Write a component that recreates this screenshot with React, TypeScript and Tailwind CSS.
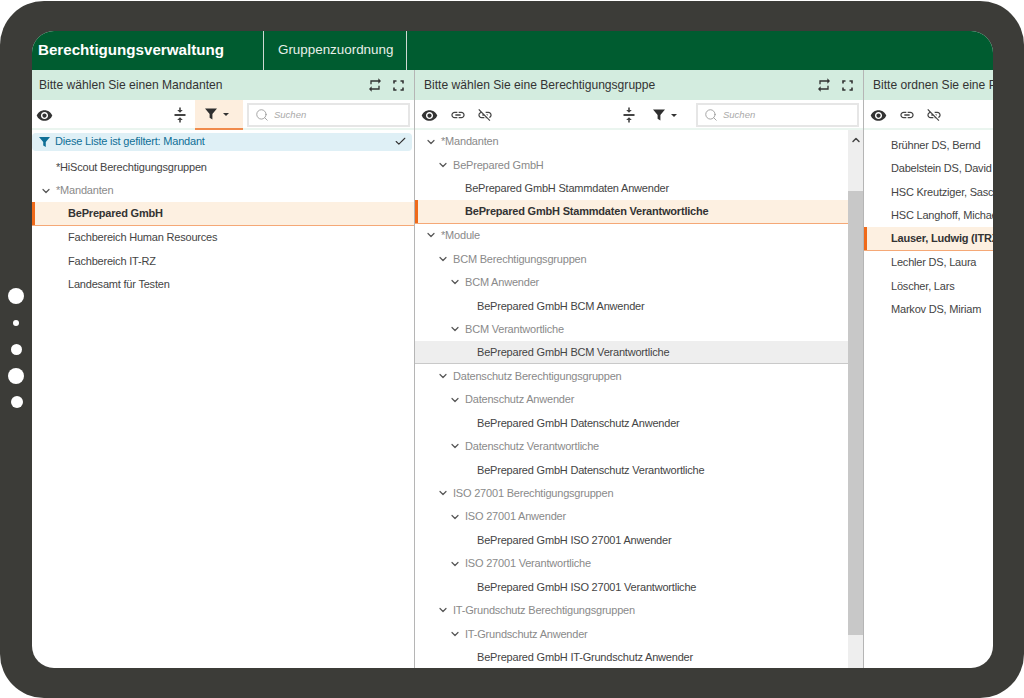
import React from "react";
import { MdVisibility, MdLink, MdLinkOff, MdRepeat } from "react-icons/md";
import { ChevronDown, ChevronUp, Search, Check } from "lucide-react";

const Eye = () => <MdVisibility size={17} className="text-[#333]" />;
const Funnel = ({ color = "#2f2f2f", w = 12, h = 12 }: { color?: string; w?: number; h?: number }) => (
  <svg width={w} height={h} viewBox="0 0 12 12" fill={color}>
    <path d="M0 0.5 H12 L7.4 6 V11.5 L4.6 9.8 V6 Z" />
  </svg>
);
const SplitIcon = () => (
  <svg width="12" height="16" viewBox="0 0 12 16" className="text-[#444]" fill="currentColor">
    <rect x="0.5" y="7" width="11" height="2" />
    <path d="M6 5.8 L3.2 3 H5.2 V0.5 H6.8 V3 H8.8 Z" />
    <path d="M6 10.2 L3.2 13 H5.2 V15.5 H6.8 V13 H8.8 Z" />
  </svg>
);
const FullIcon = () => (
  <svg width="11" height="11" viewBox="0 0 11 11" fill="none" stroke="#333" strokeWidth="1.6">
    <path d="M1 3.5V1H3.5M7.5 1H10V3.5M10 7.5V10H7.5M3.5 10H1V7.5" />
  </svg>
);
const FilterBtn = ({ active }: { active?: boolean }) => (
  <div className={"flex h-[30px] w-[48px] items-center justify-center gap-[6px] pr-[4px] " + (active ? "border-b-2 border-[#f08a4b] bg-[#fdeede]" : "")}>
    <Funnel />
    <span className="h-0 w-0 border-x-[3.5px] border-t-[3.5px] border-x-transparent border-t-[#333]" />
  </div>
);
const SearchBox = ({ w }: { w: string }) => (
  <div className={"flex h-[24px] items-center gap-[5px] border-2 border-[#e6e6e6] bg-white pl-[6px] " + w}>
    <Search size={14} className="text-[#999]" strokeWidth={1.5} />
    <span className="text-[9.5px] text-[#aaa] italic">Suchen</span>
  </div>
);
const Title = ({ text, icons = true, pl }: { text: string; icons?: boolean; pl: string }) => (
  <div className={"flex h-[30px] shrink-0 items-center bg-[#d3ecdf] pr-[10px] " + pl}>
    <span className="flex-1 text-[12.1px] whitespace-nowrap text-[#333]">{text}</span>
    {icons && (
      <div className="flex items-center gap-[10px]">
        <MdRepeat size={16} className="text-[#333]" />
        <FullIcon />
      </div>
    )}
  </div>
);

type RowT = { t: string; lvl: number; kind?: "group" | "leaf" | "sel" | "hover" };
const Row = ({ t, lvl, kind = "leaf", base }: RowT & { base: number }) => {
  const pad = base + lvl * 12;
  const cls =
    kind === "sel"
      ? "border-b border-[#f5a876] bg-[#fdf0e1] font-bold text-[#333]"
      : kind === "hover"
        ? "border-b border-[#c9c9c9] bg-[#eeeeee] text-[#444]"
        : kind === "group"
          ? "text-[#8a8a8a]"
          : "text-[#444]";
  return (
    <div className={"relative flex h-[23.45px] items-center text-[11px] tracking-[-0.2px] whitespace-nowrap " + cls} style={{ paddingLeft: pad }}>
      {kind === "sel" && <span className="absolute top-0 bottom-0 left-0 w-[3px] bg-[#ef6a1a]" />}
      {kind === "group" && <ChevronDown size={12} strokeWidth={2.4} className="mr-[4px] -ml-[16px] text-[#555]" />}
      {t}
    </div>
  );
};

const col2: RowT[] = [
  { t: "*Mandanten", lvl: 0, kind: "group" },
  { t: "BePrepared GmbH", lvl: 1, kind: "group" },
  { t: "BePrepared GmbH Stammdaten Anwender", lvl: 2 },
  { t: "BePrepared GmbH Stammdaten Verantwortliche", lvl: 2, kind: "sel" },
  { t: "*Module", lvl: 0, kind: "group" },
  { t: "BCM Berechtigungsgruppen", lvl: 1, kind: "group" },
  { t: "BCM Anwender", lvl: 2, kind: "group" },
  { t: "BePrepared GmbH BCM Anwender", lvl: 3 },
  { t: "BCM Verantwortliche", lvl: 2, kind: "group" },
  { t: "BePrepared GmbH BCM Verantwortliche", lvl: 3, kind: "hover" },
  { t: "Datenschutz Berechtigungsgruppen", lvl: 1, kind: "group" },
  { t: "Datenschutz Anwender", lvl: 2, kind: "group" },
  { t: "BePrepared GmbH Datenschutz Anwender", lvl: 3 },
  { t: "Datenschutz Verantwortliche", lvl: 2, kind: "group" },
  { t: "BePrepared GmbH Datenschutz Verantwortliche", lvl: 3 },
  { t: "ISO 27001 Berechtigungsgruppen", lvl: 1, kind: "group" },
  { t: "ISO 27001 Anwender", lvl: 2, kind: "group" },
  { t: "BePrepared GmbH ISO 27001 Anwender", lvl: 3 },
  { t: "ISO 27001 Verantwortliche", lvl: 2, kind: "group" },
  { t: "BePrepared GmbH ISO 27001 Verantwortliche", lvl: 3 },
  { t: "IT-Grundschutz Berechtigungsgruppen", lvl: 1, kind: "group" },
  { t: "IT-Grundschutz Anwender", lvl: 2, kind: "group" },
  { t: "BePrepared GmbH IT-Grundschutz Anwender", lvl: 3 },
];
const col1: RowT[] = [
  { t: "*HiScout Berechtigungsgruppen", lvl: 0 },
  { t: "*Mandanten", lvl: 0, kind: "group" },
  { t: "BePrepared GmbH", lvl: 1, kind: "sel" },
  { t: "Fachbereich Human Resources", lvl: 1 },
  { t: "Fachbereich IT-RZ", lvl: 1 },
  { t: "Landesamt für Testen", lvl: 1 },
];
const col3: RowT[] = [
  { t: "Brühner DS, Bernd", lvl: 0 },
  { t: "Dabelstein DS, David", lvl: 0 },
  { t: "HSC Kreutziger, Sascha", lvl: 0 },
  { t: "HSC Langhoff, Michael", lvl: 0 },
  { t: "Lauser, Ludwig (ITRZ)", lvl: 0, kind: "sel" },
  { t: "Lechler DS, Laura", lvl: 0 },
  { t: "Löscher, Lars", lvl: 0 },
  { t: "Markov DS, Miriam", lvl: 0 },
];

const bar = "flex h-[30px] shrink-0 items-center shadow-[inset_0_-2px_0_#eaf5ef] ";

export default function App() {
  return (
    <div className="relative h-[698px] w-[1024px] overflow-hidden bg-white pt-px font-['Liberation_Sans',Arial,sans-serif]">
      <div className="h-[697px] rounded-[44px] bg-[#3c3c38] pt-[30px] pr-[31px] pb-[30px] pl-[32px]">
        <div className="flex h-full flex-col overflow-hidden rounded-[22px] bg-white">
          <div className="flex h-[39px] shrink-0 items-stretch bg-[#005c30] text-white">
            <div className="flex w-[232px] items-center border-r border-[#cfd8d2] pl-[6px] text-[15.15px] font-bold">Berechtigungsverwaltung</div>
            <div className="flex w-[143px] items-center border-r border-[#cfd8d2] pl-[14px] text-[13.4px] text-[#e8efe9]">Gruppenzuordnung</div>
          </div>
          <div className="flex min-h-0 flex-1">
            <div className="flex w-[383px] shrink-0 flex-col border-r border-[#b5b5b5]">
              <Title text="Bitte wählen Sie einen Mandanten" pl="pl-[7px]" />
              <div className={bar + "pl-[4px]"}>
                <Eye />
                <div className="flex-1" />
                <SplitIcon />
                <div className="ml-[9px]"><FilterBtn active /></div>
                <div className="mr-[4px] ml-[4px]"><SearchBox w="w-[163px]" /></div>
              </div>
              <div className="mt-[2.5px] mr-[2px] mb-[5px] flex h-[18px] shrink-0 items-center rounded-sm bg-[#dff0f6] pr-[5px] pl-[7px] text-[11px] tracking-[-0.2px] text-[#0f6f96]">
                <Funnel color="#0f6f96" w={11} h={12} />
                <span className="ml-[5px] flex-1">Diese Liste ist gefiltert: Mandant</span>
                <Check size={13} className="text-[#333]" />
              </div>
              {col1.map((r) => <Row key={r.t} {...r} base={24} />)}
            </div>
            <div className="flex w-[449px] shrink-0 flex-col border-r border-[#b5b5b5]">
              <Title text="Bitte wählen Sie eine Berechtigungsgruppe" pl="pl-[9px]" />
              <div className={bar + "pl-[6px]"}>
                <Eye />
                <MdLink size={16} className="ml-[12px] text-[#444]" />
                <MdLinkOff size={16} className="ml-[11px] text-[#444]" />
                <div className="flex-1" />
                <SplitIcon />
                <div className="ml-[8px]"><FilterBtn /></div>
                <div className="mr-[4px] ml-[5px]"><SearchBox w="w-[163px]" /></div>
              </div>
              <div className="flex min-h-0 flex-1">
                <div className="min-w-0 flex-1 overflow-hidden">
                  {col2.map((r) => <Row key={r.t} {...r} base={26} />)}
                </div>
                <div className="flex w-[15px] shrink-0 flex-col bg-[#eeeeee]">
                  <div className="flex h-[60.5px] justify-center pt-[4px]"><ChevronUp size={12} strokeWidth={3} className="text-[#444]" /></div>
                  <div className="h-[444px] bg-[#c8c8c8]" />
                </div>
              </div>
            </div>
            <div className="flex min-w-0 flex-1 flex-col overflow-hidden">
              <Title text="Bitte ordnen Sie eine Person zu" icons={false} pl="pl-[9px]" />
              <div className={bar + "pl-[6px]"}>
                <Eye />
                <MdLink size={16} className="ml-[12px] text-[#444]" />
                <MdLinkOff size={16} className="ml-[11px] text-[#444]" />
              </div>
              <div className="overflow-hidden pt-[3.5px]">
                {col3.map((r) => <Row key={r.t} {...r} base={27} />)}
              </div>
            </div>
          </div>
        </div>
      </div>
      <span className="absolute top-[288px] left-[8px] h-4 w-4 rounded-full bg-white" />
      <span className="absolute top-[320px] left-[13px] h-[6px] w-[6px] rounded-full bg-white" />
      <span className="absolute top-[344px] left-[11px] h-[11px] w-[11px] rounded-full bg-white" />
      <span className="absolute top-[368px] left-[8px] h-4 w-4 rounded-full bg-white" />
      <span className="absolute top-[396px] left-[11px] h-3 w-3 rounded-full bg-white" />
    </div>
  );
}
